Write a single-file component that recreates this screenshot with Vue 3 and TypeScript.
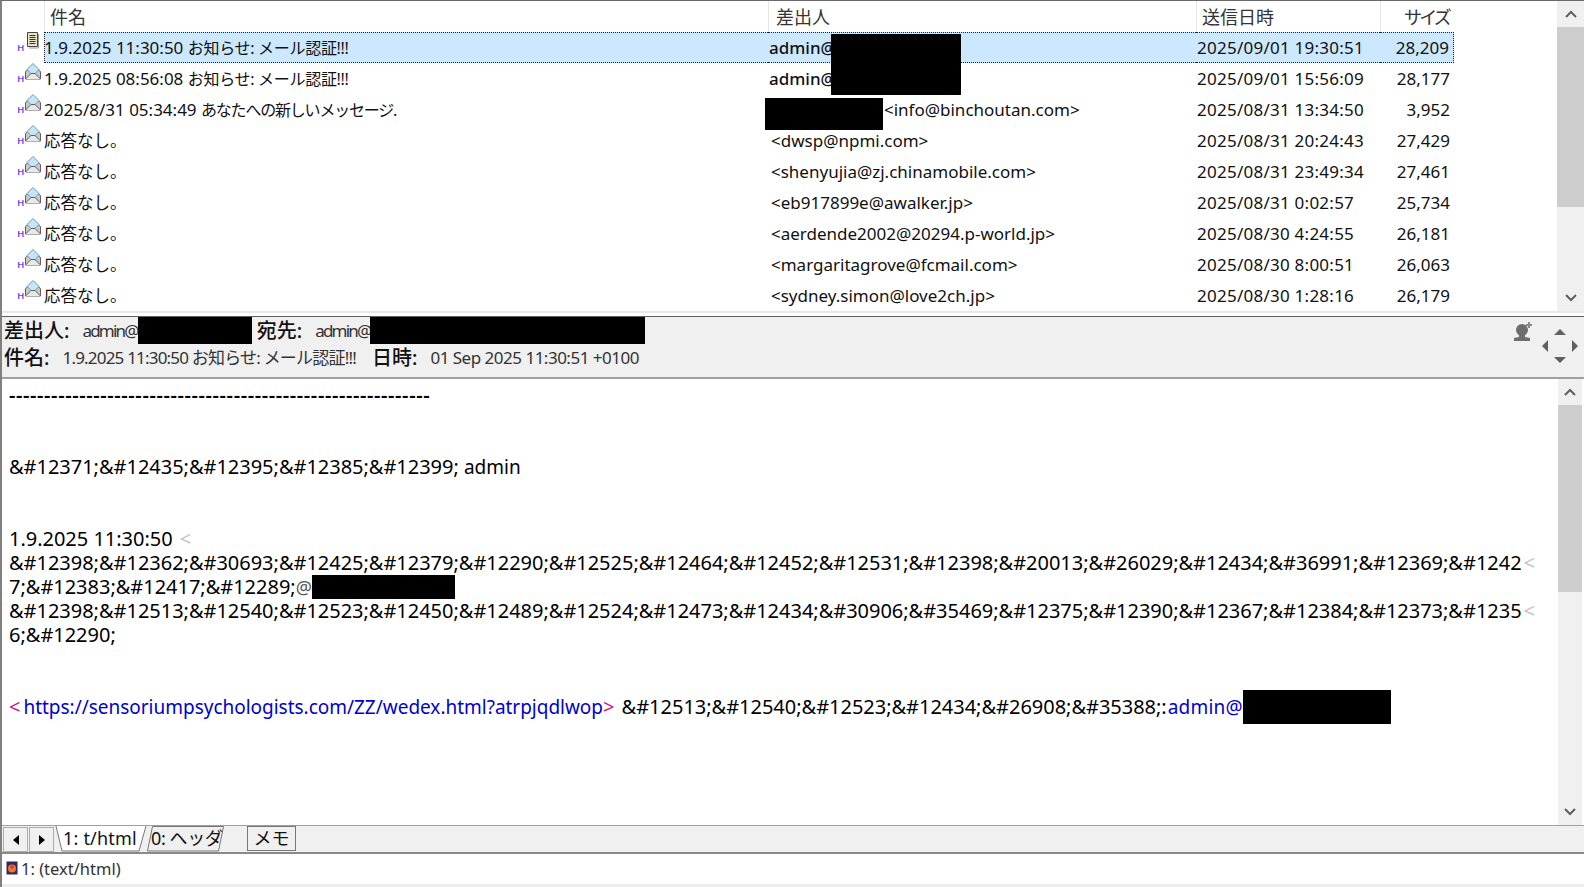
<script setup lang="ts">
interface Mail {
  stamp: string
  title: string
  from: string
  date: string
  size: string
}

const mails: Mail[] = [
  { stamp: '1.9.2025 11:30:50 ', title: 'お知らせ: メール認証!!!', from: 'admin@', date: '2025/09/01 19:30:51', size: '28,209' },
  { stamp: '1.9.2025 08:56:08 ', title: 'お知らせ: メール認証!!!', from: 'admin@', date: '2025/09/01 15:56:09', size: '28,177' },
  { stamp: '2025/8/31 05:34:49 ', title: 'あなたへの新しいメッセージ.', from: '<info@binchoutan.com>', date: '2025/08/31 13:34:50', size: '3,952' },
  { stamp: '', title: '応答なし。', from: '<dwsp@npmi.com>', date: '2025/08/31 20:24:43', size: '27,429' },
  { stamp: '', title: '応答なし。', from: '<shenyujia@zj.chinamobile.com>', date: '2025/08/31 23:49:34', size: '27,461' },
  { stamp: '', title: '応答なし。', from: '<eb917899e@awalker.jp>', date: '2025/08/31 0:02:57', size: '25,734' },
  { stamp: '', title: '応答なし。', from: '<aerdende2002@20294.p-world.jp>', date: '2025/08/30 4:24:55', size: '26,181' },
  { stamp: '', title: '応答なし。', from: '<margaritagrove@fcmail.com>', date: '2025/08/30 8:00:51', size: '26,063' },
  { stamp: '', title: '応答なし。', from: '<sydney.simon@love2ch.jp>', date: '2025/08/30 1:28:16', size: '26,179' },
]

const line1 = '&#12398;&#12362;&#30693;&#12425;&#12379;&#12290;&#12525;&#12464;&#12452;&#12531;&#12398;&#20013;&#26029;&#12434;&#36991;&#12369;&#1242'
const line2 = '&#12398;&#12513;&#12540;&#12523;&#12450;&#12489;&#12524;&#12473;&#12434;&#30906;&#35469;&#12375;&#12390;&#12367;&#12384;&#12373;&#1235'
</script>

<template>
  <div class="window">
    <section class="list-pane">
      <div class="list">
        <div class="list-head">
          <div class="head-icon"></div>
          <div class="head-cell">件名</div>
          <div class="head-cell wide">差出人</div>
          <div class="head-cell">送信日時</div>
          <div class="head-cell right">サイズ</div>
        </div>
        <div v-for="(m, i) in mails" :key="i" class="row" :class="{ selected: i === 0 }">
          <div class="row-icon">
            <span class="h-mark">H</span>
            <svg v-if="i === 0" width="16" height="17" viewBox="0 0 16 17">
              <path d="M2.500 .500h10v14h-10z" fill="#e9e4c8" stroke="#444" />
              <path d="M13.500 2v14H4" fill="none" stroke="#999" />
              <path d="M4.500 3.500h6M4.500 5.500h6M4.500 7.500h6M4.500 9.500h6M4.500 11.500h6" stroke="#2222bb" />
            </svg>
            <svg v-else width="16" height="17" viewBox="0 0 16 17">
              <path d="M.500 8.500 8 3l7.500 5.500v7.500H.500z" fill="#c9c9c9" stroke="#5f5f5f" />
              <path d="M8 .500 14 6.500 8 12.500 2 6.500z" fill="#c6e6f6" stroke="#6d9ab3" />
              <path d="M.500 16 6 10.500h4l5.500 5.500" fill="#e8e8e8" stroke="#5f5f5f" />
            </svg>
          </div>
          <div class="cell subject">{{ m.stamp }}<span class="jp" :class="{ 'jp-a': i < 2, 'jp-b': i === 2 }">{{ m.title }}</span></div>
          <div class="cell from" :class="{ strong: i < 2, shifted: i === 2 }">{{ m.from }}</div>
          <div class="cell date">{{ m.date }}</div>
          <div class="cell size">{{ m.size }}</div>
        </div>
        <div class="mask mask-a"></div>
        <div class="mask mask-b"></div>
      </div>
      <div class="scroll list-scroll">
        <div class="scroll-btn">
          <svg width="12" height="8" viewBox="0 0 12 8"><path d="M1 7 6 2l5 5" fill="none" stroke="#606060" stroke-width="2" /></svg>
        </div>
        <div class="thumb list-thumb"></div>
        <div class="track"></div>
        <div class="scroll-btn">
          <svg width="12" height="8" viewBox="0 0 12 8"><path d="M1 1l5 5 5-5" fill="none" stroke="#606060" stroke-width="2" /></svg>
        </div>
      </div>
    </section>

    <div class="splitter"></div>

    <section class="mail-head">
      <div class="head-lines">
        <div class="head-line">
          <b>差出人:</b><span class="val addr">admin@</span><i class="redact r-from"></i>
          <b class="tight">宛先:</b><span class="val addr">admin@</span><i class="redact r-to"></i>
        </div>
        <div class="head-line second">
          <b>件名:</b><span class="val subj">1.9.2025 11:30:50 お知らせ: メール認証!!!</span>
          <b class="gap">日時:</b><span class="val">01 Sep 2025 11:30:51 +0100</span>
        </div>
      </div>
      <div class="head-tools">
        <svg class="person" width="20" height="20" viewBox="0 0 20 20">
          <circle cx="8" cy="9" r="6" fill="#6d6d6d" />
          <path d="M5 14h6v2l5 1v3H0v-3l5-1z" fill="#6d6d6d" />
          <path d="M15 1v6M12 4h6" stroke="#8a8a8a" stroke-width="2" />
        </svg>
        <svg class="nav" width="36" height="34" viewBox="0 0 36 34">
          <path d="M18 0l6 6H12zM18 34l-6-6h12zM0 17l6-6v12zM36 17l-6-6v12z" fill="#606060" />
        </svg>
      </div>
    </section>

    <section class="body-pane">
      <div class="text">
        <div class="line dashes">------------------------------------------------------------</div>
        <div class="line"></div>
        <div class="line"></div>
        <div class="line">&amp;#12371;&amp;#12435;&amp;#12395;&amp;#12385;&amp;#12399; <span class="small">admin</span></div>
        <div class="line"></div>
        <div class="line"></div>
        <div class="line">1.9.2025 11:30:50 <span class="wrap-mark">&lt;</span></div>
        <div class="line">{{ line1 }}<span class="wrap-mark">&lt;</span></div>
        <div class="line">7;&amp;#12383;&amp;#12417;&amp;#12289;<span class="at">@</span><i class="redact r-body"></i></div>
        <div class="line">{{ line2 }}<span class="wrap-mark">&lt;</span></div>
        <div class="line">6;&amp;#12290;</div>
        <div class="line"></div>
        <div class="line"></div>
        <div class="line"><span class="pink open">&lt;</span><a class="link small">https://sensoriumpsychologists.com/ZZ/wedex.html?atrpjqdlwop</a><span class="pink close">&gt;</span> &amp;#12513;&amp;#12540;&amp;#12523;&amp;#12434;&amp;#26908;&amp;#35388;:<a class="link small mail">admin@</a><i class="redact r-link"></i></div>
      </div>
      <div class="scroll body-scroll">
        <div class="scroll-btn">
          <svg width="12" height="8" viewBox="0 0 12 8"><path d="M1 7 6 2l5 5" fill="none" stroke="#606060" stroke-width="2" /></svg>
        </div>
        <div class="thumb body-thumb"></div>
        <div class="track"></div>
        <div class="scroll-btn">
          <svg width="12" height="8" viewBox="0 0 12 8"><path d="M1 1l5 5 5-5" fill="none" stroke="#606060" stroke-width="2" /></svg>
        </div>
      </div>
    </section>

    <section class="tabs">
      <button class="nav-btn"><span class="tri-l"></span></button>
      <button class="nav-btn"><span class="tri-r"></span></button>
      <div class="tab tab-active">
        <svg width="92" height="27" viewBox="0 0 92 27"><path d="M1 0 7 25H84L91 0" fill="#fff" stroke="#777" /></svg>
        <span>1: t/html</span>
      </div>
      <div class="tab tab-idle">
        <svg width="78" height="27" viewBox="0 0 78 27"><path d="M5.500.500H76.500L71.500 25H.500z" fill="#f0f0f0" stroke="#777" /></svg>
        <span>0: ヘッダ</span>
      </div>
      <div class="tab-memo">メモ</div>
    </section>

    <section class="status">
      <svg width="12" height="14" viewBox="0 0 12 14">
        <rect x="0.500" y="0.500" width="11" height="13" fill="#2d2a66" />
        <circle cx="6" cy="7.500" r="4" fill="#f07a1c" />
        <circle cx="6" cy="6" r="1.800" fill="#e33" />
      </svg>
      <span>1: (text/html)</span>
    </section>
  </div>
</template>

<style scoped>
.window {
  width: 1584px;
  height: 887px;
  display: flex;
  flex-direction: column;
  overflow: hidden;
  background: #fff;
  color: #111;
  border-top: 1px solid #696969;
  border-left: 2px solid #808080;
  box-sizing: border-box;
  font-family: "Noto Sans", "Noto Sans CJK JP", sans-serif;
  font-size: 17px;
}

.list-pane {
  height: 310px;
  display: flex;
  flex: none;
}

.list {
  position: relative;
  width: 1555px;
  overflow: hidden;
}

.list-head,
.row {
  display: grid;
  grid-template-columns: 42px 724px 428px 184px 74px;
}

.list-head {
  height: 31px;
  align-items: center;
}

.head-icon {
  height: 100%;
}

.head-cell {
  height: 100%;
  line-height: 32px;
  padding-left: 5px;
  border-left: 1px solid #e5e5e5;
  color: #333;
  font-size: 18px;
}

.head-cell.wide {
  padding-left: 7px;
}

.head-cell.right {
  text-align: right;
  padding-right: 5px;
  letter-spacing: -2.800px;
}

.row {
  height: 31px;
  line-height: 32px;
  white-space: nowrap;
}

.row.selected .cell {
  background: #cce8ff;
  border-top: 1px dotted #222;
  border-bottom: 1px dotted #222;
  line-height: 30px;
}

.row.selected .subject {
  border-left: 1px dotted #222;
  text-indent: -1px;
}

.row.selected .size {
  border-right: 1px dotted #222;
}

.row-icon {
  position: relative;
  display: flex;
  justify-content: flex-end;
  padding-right: 3px;
  align-items: flex-start;
}

.h-mark {
  font-family: "Liberation Sans", sans-serif;
  font-size: 9px;
  line-height: 8px;
  color: #0000ff;
  margin-top: 12px;
  margin-right: 1px;
}

.cell {
  overflow: hidden;
}

.jp {
  font-size: 16.500px;
}

.jp-a {
  font-size: 16px;
  letter-spacing: -0.300px;
}

.jp-b {
  font-size: 16px;
  letter-spacing: -1.200px;
}

.from {
  padding-left: 3px;
}

.from.strong {
  padding-left: 1px;
  font-weight: 500;
}

.from.shifted {
  padding-left: 116px;
}

.date {
  padding-left: 1px;
  letter-spacing: 0.250px;
}

.size {
  text-align: right;
  padding-right: 4px;
}

.mask {
  position: absolute;
  background: #000;
}

.mask-a {
  left: 829px;
  top: 33px;
  width: 130px;
  height: 61px;
}

.mask-b {
  left: 763px;
  top: 97px;
  width: 118px;
  height: 32px;
}

.scroll {
  display: flex;
  flex-direction: column;
  flex: none;
  background: #f0f0f0;
}

.list-scroll {
  width: 27px;
}

.scroll-btn {
  height: 26px;
  flex: none;
  display: flex;
  align-items: center;
  justify-content: center;
}

.thumb {
  flex: none;
  background: #cdcdcd;
}

.list-thumb {
  height: 180px;
}

.body-thumb {
  height: 187px;
}

.track {
  flex: 1;
}

.splitter {
  height: 6px;
  flex: none;
  box-sizing: border-box;
  border-top: 2px solid #e8e8e8;
  border-bottom: 1px solid #606060;
}

.mail-head {
  height: 60px;
  flex: none;
  display: flex;
  justify-content: space-between;
  background: #f0f0f0;
  border-bottom: 2px solid #a0a0a0;
  box-sizing: content-box;
}

.head-lines {
  padding-left: 2px;
}

.head-line {
  height: 27px;
  display: flex;
  align-items: center;
  white-space: nowrap;
  line-height: 25px;
  font-size: 20px;
}

.head-line b {
  font-weight: 500;
  margin-right: 13px;
}

.head-line b.tight {
  margin-left: 5px;
}

.head-line b.gap {
  margin-left: 16px;
}

.val {
  font-size: 17px;
  letter-spacing: -0.500px;
  color: #333;
}

.val.addr {
  letter-spacing: -1.800px;
}

.val.subj {
  letter-spacing: -0.800px;
}

.redact {
  display: inline-block;
  background: #000;
  align-self: flex-start;
}

.r-from {
  width: 114px;
  height: 27px;
}

.r-to {
  width: 275px;
  height: 27px;
}

.head-tools {
  display: flex;
  align-items: flex-start;
  gap: 8px;
  padding: 4px 6px 0 0;
}

.nav {
  margin-top: 8px;
}

.body-pane {
  flex: 1;
  display: flex;
  min-height: 0;
}

.text {
  width: 1556px;
  padding: 4px 0 0 7px;
  box-sizing: border-box;
  overflow: hidden;
  font-size: 20px;
  letter-spacing: -0.020px;
  color: #000;
}

.line {
  height: 24px;
  line-height: 24px;
  white-space: nowrap;
  position: relative;
}

.dashes {
  letter-spacing: 0.620px;
  font-weight: 600;
}

.small {
  font-size: 19px;
}

.wrap-mark {
  color: #c4c4c4;
  margin-left: 2px;
}

.at {
  color: #555;
  font-size: 18px;
}

.pink {
  color: #d6147f;
}

.pink.open {
  margin-right: 3px;
}

.pink.close {
  margin-right: 2px;
}

.link {
  color: #0000d0;
}

.link.mail {
  letter-spacing: 0.200px;
  margin-left: 1px;
}

.r-body {
  width: 143px;
  height: 24px;
  vertical-align: top;
}

.r-link {
  width: 148px;
  height: 34px;
  vertical-align: top;
  margin-top: -5px;
}

.body-scroll {
  width: 24px;
}

.tabs {
  height: 26px;
  flex: none;
  display: flex;
  align-items: flex-start;
  background: #f0f0f0;
  border-top: 1px solid #a0a0a0;
  border-bottom: 2px solid #8a8a8a;
}

.nav-btn {
  width: 25px;
  height: 25px;
  margin: 1px 0 0 1px;
  padding: 0;
  display: flex;
  align-items: center;
  justify-content: center;
  background: #f0f0f0;
  border: 1px solid #adadad;
}

.tri-l,
.tri-r {
  width: 0;
  height: 0;
  border-top: 5px solid transparent;
  border-bottom: 5px solid transparent;
}

.tri-l {
  border-right: 6px solid #000;
}

.tri-r {
  border-left: 6px solid #000;
}

.tab {
  position: relative;
  height: 26px;
  line-height: 25px;
  white-space: nowrap;
  font-size: 18px;
}

.tab svg {
  position: absolute;
  left: 0;
  top: 0;
}

.tab span {
  position: relative;
  display: block;
}

.tab-active {
  width: 92px;
  margin-left: 1px;
}

.tab-active span {
  padding-left: 8px;
  letter-spacing: 0.200px;
}

.tab-idle {
  width: 78px;
}

.tab-idle span {
  padding-left: 4px;
  letter-spacing: -0.400px;
}

.tab-memo {
  width: 49px;
  height: 25px;
  margin-left: 22px;
  box-sizing: border-box;
  border: 1px solid #777;
  text-align: center;
  line-height: 23px;
  white-space: nowrap;
  font-size: 18px;
}

.status {
  height: 33px;
  flex: none;
  display: flex;
  align-items: center;
  gap: 3px;
  padding: 0 0 2px 4px;
  border-bottom: 3px solid #ededed;
  box-sizing: border-box;
  color: #333;
  font-size: 16.500px;
}
</style>

<style>
html,
body {
  margin: 0;
  overflow: hidden;
}
</style>
